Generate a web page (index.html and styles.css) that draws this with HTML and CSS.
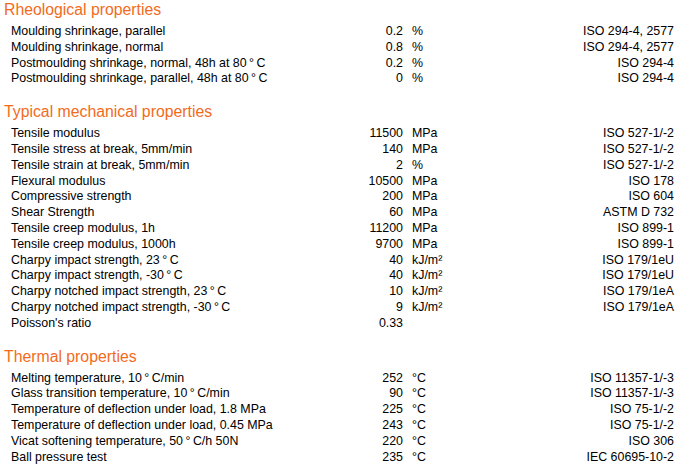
FILE: index.html
```html
<!DOCTYPE html>
<html>
<head>
<meta charset="utf-8">
<link rel="stylesheet" href="styles.css">
</head>
<body>
<div class="sheet">
  <section class="section">
    <h2 class="heading">Rheological properties</h2>
    <div class="table">
      <div class="row"><span class="label">Moulding shrinkage, parallel</span><span class="value">0.2</span><span class="unit">%</span><span class="std">ISO 294-4, 2577</span></div>
      <div class="row"><span class="label">Moulding shrinkage, normal</span><span class="value">0.8</span><span class="unit">%</span><span class="std">ISO 294-4, 2577</span></div>
      <div class="row"><span class="label">Postmoulding shrinkage, normal, 48h at 80&#8201;°&#8201;C</span><span class="value">0.2</span><span class="unit">%</span><span class="std">ISO 294-4</span></div>
      <div class="row"><span class="label">Postmoulding shrinkage, parallel, 48h at 80&#8201;°&#8201;C</span><span class="value">0</span><span class="unit">%</span><span class="std">ISO 294-4</span></div>
    </div>
  </section>
  <section class="section">
    <h2 class="heading">Typical mechanical properties</h2>
    <div class="table">
      <div class="row"><span class="label">Tensile modulus</span><span class="value">11500</span><span class="unit">MPa</span><span class="std">ISO 527-1/-2</span></div>
      <div class="row"><span class="label">Tensile stress at break, 5mm/min</span><span class="value">140</span><span class="unit">MPa</span><span class="std">ISO 527-1/-2</span></div>
      <div class="row"><span class="label">Tensile strain at break, 5mm/min</span><span class="value">2</span><span class="unit">%</span><span class="std">ISO 527-1/-2</span></div>
      <div class="row"><span class="label">Flexural modulus</span><span class="value">10500</span><span class="unit">MPa</span><span class="std">ISO 178</span></div>
      <div class="row"><span class="label">Compressive strength</span><span class="value">200</span><span class="unit">MPa</span><span class="std">ISO 604</span></div>
      <div class="row"><span class="label">Shear Strength</span><span class="value">60</span><span class="unit">MPa</span><span class="std">ASTM D 732</span></div>
      <div class="row"><span class="label">Tensile creep modulus, 1h</span><span class="value">11200</span><span class="unit">MPa</span><span class="std">ISO 899-1</span></div>
      <div class="row"><span class="label">Tensile creep modulus, 1000h</span><span class="value">9700</span><span class="unit">MPa</span><span class="std">ISO 899-1</span></div>
      <div class="row"><span class="label">Charpy impact strength, 23&#8201;°&#8201;C</span><span class="value">40</span><span class="unit">kJ/m²</span><span class="std">ISO 179/1eU</span></div>
      <div class="row"><span class="label">Charpy impact strength, -30&#8201;°&#8201;C</span><span class="value">40</span><span class="unit">kJ/m²</span><span class="std">ISO 179/1eU</span></div>
      <div class="row"><span class="label">Charpy notched impact strength, 23&#8201;°&#8201;C</span><span class="value">10</span><span class="unit">kJ/m²</span><span class="std">ISO 179/1eA</span></div>
      <div class="row"><span class="label">Charpy notched impact strength, -30&#8201;°&#8201;C</span><span class="value">9</span><span class="unit">kJ/m²</span><span class="std">ISO 179/1eA</span></div>
      <div class="row"><span class="label">Poisson's ratio</span><span class="value">0.33</span><span class="unit"></span><span class="std"></span></div>
    </div>
  </section>
  <section class="section">
    <h2 class="heading">Thermal properties</h2>
    <div class="table">
      <div class="row"><span class="label">Melting temperature, 10&#8201;°&#8201;C/min</span><span class="value">252</span><span class="unit">°C</span><span class="std">ISO 11357-1/-3</span></div>
      <div class="row"><span class="label">Glass transition temperature, 10&#8201;°&#8201;C/min</span><span class="value">90</span><span class="unit">°C</span><span class="std">ISO 11357-1/-3</span></div>
      <div class="row"><span class="label">Temperature of deflection under load, 1.8 MPa</span><span class="value">225</span><span class="unit">°C</span><span class="std">ISO 75-1/-2</span></div>
      <div class="row"><span class="label">Temperature of deflection under load, 0.45 MPa</span><span class="value">243</span><span class="unit">°C</span><span class="std">ISO 75-1/-2</span></div>
      <div class="row"><span class="label">Vicat softening temperature, 50&#8201;°&#8201;C/h 50N</span><span class="value">220</span><span class="unit">°C</span><span class="std">ISO 306</span></div>
      <div class="row"><span class="label">Ball pressure test</span><span class="value">235</span><span class="unit">°C</span><span class="std">IEC 60695-10-2</span></div>
    </div>
  </section>
</div>
</body>
</html>
```

FILE: styles.css
```css
html, body {
  margin: 0;
  padding: 0;
  background: #ffffff;
}
body {
  font-family: "Liberation Sans", Arial, sans-serif;
  color: #000000;
}
.sheet {
  padding: 0 5px 0 4px;
  display: flex;
  flex-direction: column;
  gap: 15px;
}
.section {
  display: flex;
  flex-direction: column;
  gap: 4px;
}
.heading {
  margin: 0;
  font-weight: normal;
  font-size: 15.8px;
  line-height: 20px;
  color: #f26b1d;
}
.table {
  padding-left: 7px;
  display: flex;
  flex-direction: column;
}
.row {
  display: grid;
  grid-template-columns: 342px 50px 100px 1fr;
  font-size: 12.4px;
  line-height: 15.8px;
  white-space: nowrap;
}
.value {
  text-align: right;
}
.unit {
  padding-left: 9px;
}
.std {
  text-align: right;
}
```
